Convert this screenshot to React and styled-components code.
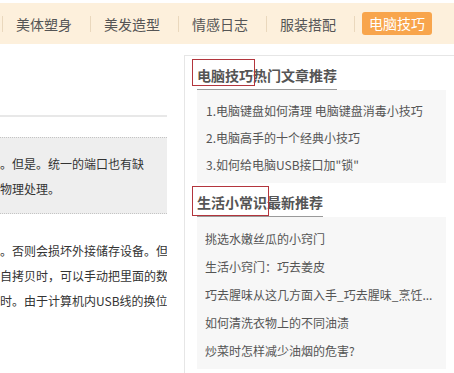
import React from "react";
import styled, { createGlobalStyle } from "styled-components";

const GlobalStyle = createGlobalStyle`
  body {
    margin: 0;
    width: 454px;
    overflow: hidden;
    background: #fff;
    font-family: "Microsoft YaHei", "Noto Sans CJK SC", sans-serif;
  }
`;

const navItems = ["美体塑身", "美发造型", "情感日志", "服装搭配"];

const hotList = [
  "1.电脑键盘如何清理 电脑键盘消毒小技巧",
  "2.电脑高手的十个经典小技巧",
  "3.如何给电脑USB接口加\"锁\"",
];

const lifeList = [
  "挑选水嫩丝瓜的小窍门",
  "生活小窍门：巧去姜皮",
  "巧去腥味从这几方面入手_巧去腥味_烹饪...",
  "如何清洗衣物上的不同油渍",
  "炒菜时怎样减少油烟的危害?",
];

const App = () => {
  return (
    <>
      <GlobalStyle />
      <Nav>
        {navItems.map((item) => (
          <React.Fragment key={item}>
            <Divider />
            <NavLink>{item}</NavLink>
          </React.Fragment>
        ))}
        <Divider />
        <ActiveLink>电脑技巧</ActiveLink>
      </Nav>
      <Main>
        <Article>
          <Rule />
          <Quote>
            <p>。但是。统一的端口也有缺</p>
            <p>物理处理。</p>
          </Quote>
          <Para>
            <p>。否则会损坏外接储存设备。但</p>
            <p>自拷贝时，可以手动把里面的数</p>
            <p>时。由于计算机内USB线的换位</p>
          </Para>
        </Article>
        <Sidebar>
          <TitleRow>
            <Title>
              <Mark $drop={3}>电脑技巧</Mark>热门文章推荐
            </Title>
          </TitleRow>
          <List $lh={27} $pad="7px 9px 5px">
            {hotList.map((t) => (
              <li key={t}>{t}</li>
            ))}
          </List>
          <TitleRow>
            <Title>
              <Mark $drop={0}>生活小常识</Mark>最新推荐
            </Title>
          </TitleRow>
          <List $lh={28} $pad="8px 8px 4px">
            {lifeList.map((t) => (
              <li key={t}>{t}</li>
            ))}
          </List>
        </Sidebar>
      </Main>
    </>
  );
};

export default App;

const Nav = styled.nav`
  display: flex;
  align-items: center;
  height: 41px;
  margin-top: 3px;
  padding-left: 2px;
  background: #fdf0dc;
  font-size: 14px;
`;

const Divider = styled.span`
  width: 1px;
  height: 16px;
  background: #ead8bd;
`;

const NavLink = styled.a`
  margin: 0 18px 0 13px;
  color: #555;
  line-height: 20px;
  white-space: nowrap;
  cursor: pointer;
`;

const ActiveLink = styled.a`
  margin-left: 7px;
  padding: 0 7px;
  height: 23px;
  line-height: 23px;
  border-radius: 3px;
  background: #f8a54c;
  color: #fff;
  white-space: nowrap;
  cursor: pointer;
`;

const Main = styled.div`
  display: flex;
  gap: 17px;
  margin-top: 11px;
`;

const Article = styled.div`
  flex: 0 0 167px;
  font-size: 12px;
  color: #333;
  white-space: nowrap;
  overflow: hidden;

  p {
    margin: 0;
  }
`;

const Rule = styled.div`
  height: 2px;
  margin-top: 60px;
  background: #e8e8e8;
`;

const Quote = styled.div`
  margin-top: 20px;
  padding: 13px 0 12px;
  background: #eeeeee;
  border-top: 1px dotted #c4c4c4;
  border-bottom: 1px dotted #c4c4c4;
  line-height: 25px;
`;

const Para = styled.div`
  margin-top: 24px;
  line-height: 25px;
`;

const Sidebar = styled.aside`
  flex: 1;
  min-width: 0;
  min-height: 330px;
  padding-left: 12px;
  border-left: 1px solid #e6e6e6;
  border-top: 1px solid #e6e6e6;
`;

const TitleRow = styled.div`
  margin-top: 5px;
`;

const Title = styled.h3`
  display: inline-block;
  margin: 0;
  line-height: 28px;
  font-size: 14px;
  font-weight: bold;
  color: #555;
  border-bottom: 1px solid #9a9a9a;
  white-space: nowrap;
`;

const Mark = styled.span`
  position: relative;
  display: inline-block;

  &::after {
    content: "";
    position: absolute;
    top: -2px;
    bottom: ${(p) => p.$drop}px;
    left: -5px;
    right: -2px;
    border: 1px solid #b3353d;
  }
`;

const List = styled.ul`
  width: 249px;
  box-sizing: border-box;
  margin: 0;
  padding: ${(p) => p.$pad};
  list-style: none;
  background: #f7f7f7;
  font-size: 12px;
  line-height: ${(p) => p.$lh}px;
  color: #555;

  li {
    white-space: nowrap;
    overflow: hidden;
  }
`;
